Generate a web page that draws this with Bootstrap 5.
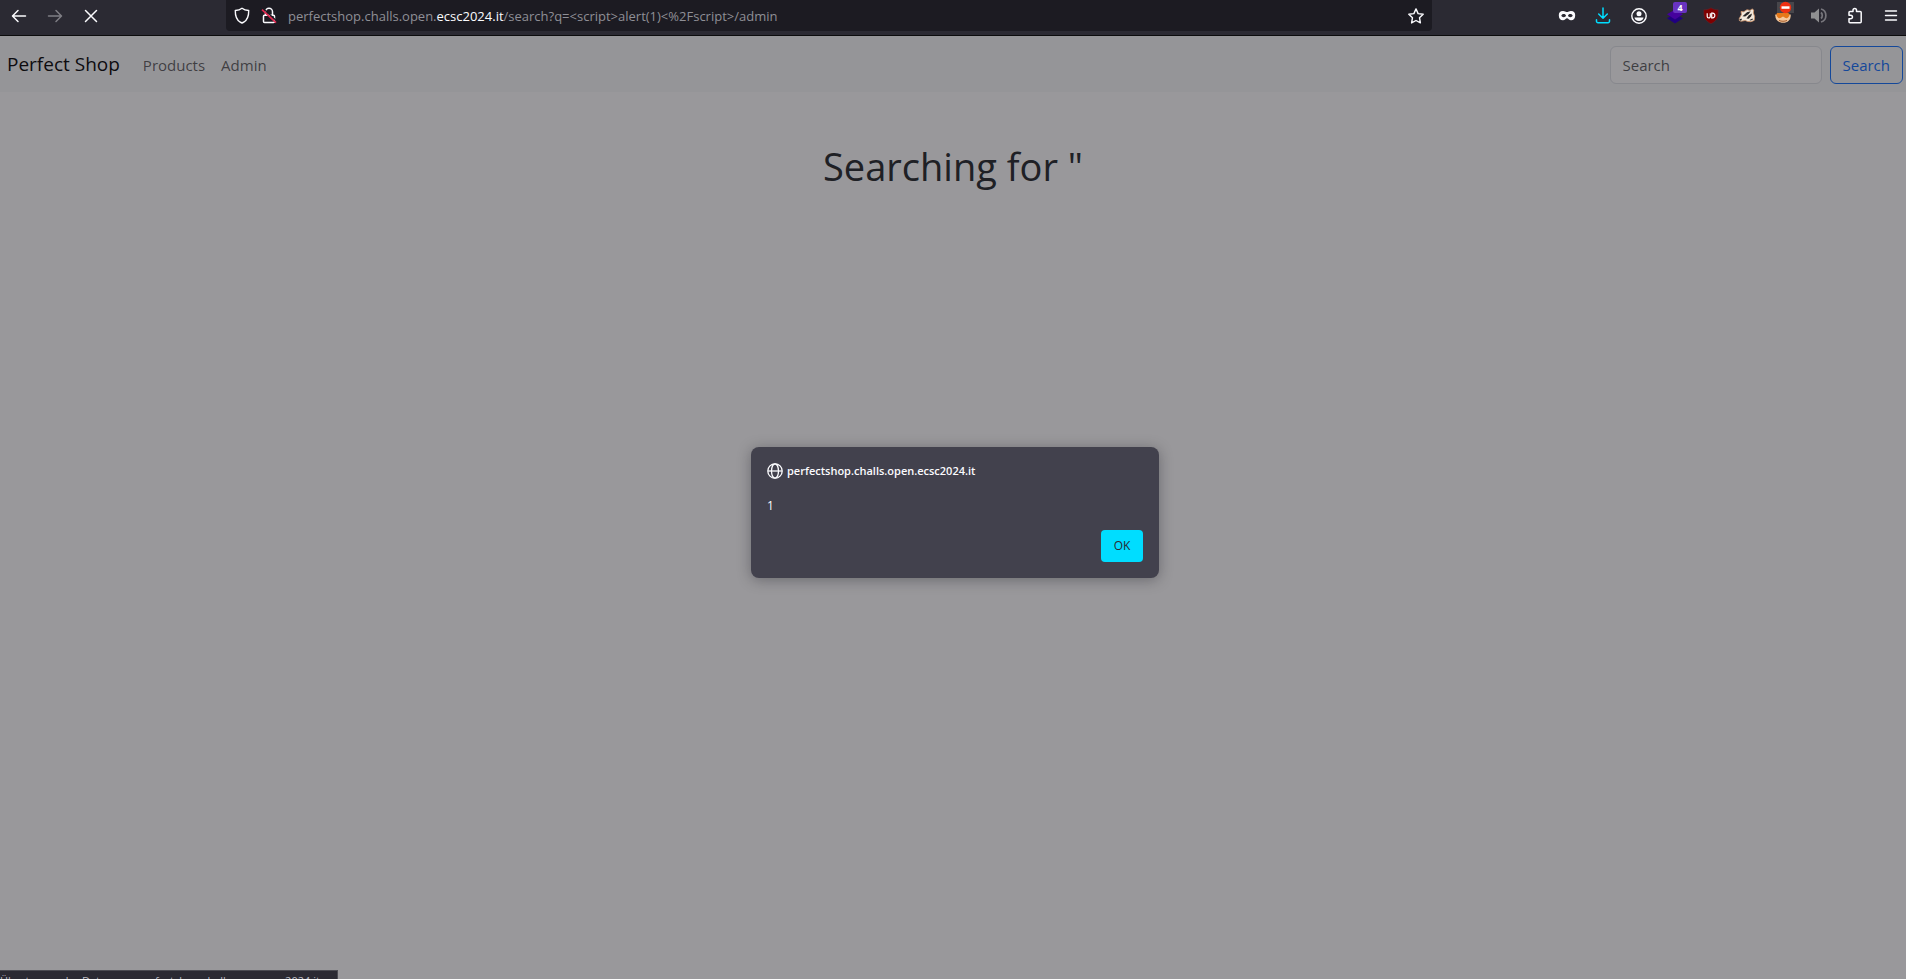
<!DOCTYPE html>
<html lang="en">
<head>
<meta charset="utf-8">
<meta name="viewport" content="width=device-width, initial-scale=1">
<title>Perfect Shop</title>
<link href="https://cdn.jsdelivr.net/npm/bootstrap@5.3.0/dist/css/bootstrap.min.css" rel="stylesheet">
<style>
body { font-family: "Open Sans", "Noto Sans", sans-serif; }
.browser-bar { height: 36px; padding: 0 7px 4px 11px; background: #2b2a33; border-bottom: 1px solid #0c0c0d; color: #fbfbfe; }
.tool-group { gap: 20px; }
.tool { width: 16px; height: 16px; padding: 0; border: 0; background: none; color: inherit; display: flex; align-items: center; justify-content: center; }
.tool svg, .address svg { width: 16px; height: 16px; overflow: visible; flex: none; display: block; }
.tool:disabled { opacity: .4; }
.address { height: 31px; margin: 0 127px; padding: 0 8px; background: #1c1b22; border-radius: 0 0 4px 4px; gap: 11px; }
.address-text { font-size: 13px; line-height: 20px; color: #8f8f96; }
.address-text strong { color: #fbfbfe; font-weight: 400; }
.tool-count { top: -6px; left: 6px; width: 14px; height: 11px; border-radius: 2px; background: #6833c0; color: #fff; font-size: 9px; font-weight: 700; line-height: 11px; }
.shop-nav { height: 56px; padding: 1px 3px 0 7px; }
.shop-nav .navbar-brand { font-size: 19px; margin-right: 15px; }
.shop-nav .nav-link, .shop-nav .form-control, .shop-nav .btn { font-size: 15px; line-height: 24px; }
.search-box { width: 212px; }
.results-title { font-size: 38px; line-height: 52px; }
.page-shade { background: rgba(28, 27, 34, .45); padding: 10px 0 0 4px; }
.alert-box { width: 408px; padding: 16px; background: #42414d; color: #fbfbfe; border-radius: 8px; box-shadow: 0 2px 14px rgba(20, 20, 30, .35); font-size: 12px; line-height: 16px; }
.alert-box svg { width: 16px; height: 16px; }
.alert-origin { gap: 4px; margin-bottom: 19px; font-weight: 600; font-size: 11px; }
.ok-btn { width: 42px; height: 32px; border-radius: 4px; background: #00ddff; color: #2b2a33; font-size: 12px; line-height: 16px; }
.ok-btn:hover { background: #80ebff; }
.status-tip { left: 0; bottom: 0; width: 338px; height: 9px; background: #2b2a33; border: solid #4b4b52; border-width: 1px 1px 0 0; color: #bbbbc2; font-size: 11px; line-height: 20px; }
</style>
</head>
<body class="vh-100 d-flex flex-column overflow-hidden">
<header class="browser-bar d-flex align-items-center flex-shrink-0">
  <div class="tool-group d-flex">
    <button class="tool" aria-label="Back"><svg viewBox="0 0 16 16" fill="none" stroke="currentColor" stroke-width="1.5" stroke-linecap="round" stroke-linejoin="round"><path d="M14.500 8H1.700M7 2.500 1.500 8 7 13.500"/></svg></button>
    <button class="tool" aria-label="Forward" disabled><svg viewBox="0 0 16 16" fill="none" stroke="currentColor" stroke-width="1.500" stroke-linecap="round" stroke-linejoin="round"><path d="M1.500 8h12.800M9 2.500 14.500 8 9 13.500"/></svg></button>
    <button class="tool" aria-label="Stop"><svg viewBox="0 0 16 16" fill="none" stroke="currentColor" stroke-width="1.500" stroke-linecap="round"><path d="m2.500 2.500 11 11m0-11-11 11"/></svg></button>
  </div>
  <div class="address d-flex align-items-center flex-grow-1 align-self-start">
    <svg viewBox="0 0 16 16" fill="none" stroke="#fbfbfe" stroke-width="1.400" stroke-linejoin="round"><path d="M8 .2c2 1.500 4.300 2.100 6.700 2.300.1 5-1.200 9.200-4.700 11.500L8 15l-2-1C2.500 11.700 1.200 7.500 1.300 2.500 3.700 2.300 6 1.700 8 .2z"/></svg>
    <svg viewBox="0 0 16 16" fill="none" stroke="#fbfbfe" stroke-width="1.500"><path d="M4.500 7V3.700a3.500 3.500 0 0 1 7 0V7M3.500 7.200h9a1 1 0 0 1 1 1v5.200a1 1 0 0 1-1 1h-9a1 1 0 0 1-1-1V8.200a1 1 0 0 1 1-1z"/><path d="m2 .5 14 12.700" stroke="#1c1b22" stroke-width="1.500"/><path d="m1 1.700 14 13" stroke="#e22850" stroke-width="1.600"/></svg>
    <span class="address-text flex-grow-1 text-nowrap">perfectshop.challs.open.<strong>ecsc2024.it</strong>/search?q=&lt;script&gt;alert(1)&lt;%2Fscript&gt;/admin</span>
    <button class="tool" aria-label="Bookmark this page"><svg viewBox="0 0 16 16" fill="none" stroke="currentColor" stroke-width="1.400" stroke-linejoin="round"><path d="m8 .9 2.100 4.700 5.100.6-3.700 3.500.9 5.200L8 12.500l-4.400 2.400.9-5.200L.8 6.200l5.100-.6z"/></svg></button>
  </div>
  <div class="tool-group d-flex">
    <button class="tool" aria-label="Private mask"><svg viewBox="0 0 16 16" fill="#fbfbfe"><path fill-rule="evenodd" d="M4 2.900C5.500 2.800 6.800 4 8 4s2.500-1.200 4-1.100c3 .1 4.200 1.700 4.200 4.300 0 3.300-1.700 5.200-4.200 5.100-2 0-2.800-2-4-2s-2 2-4 2C1.500 12.400-.2 10.500-.2 7.200-.2 4.600 1 3 4 2.900zM4.700 6C3.400 6 2.700 6.700 2.300 7.600c.4.900 1.100 1.600 2.400 1.600s2-.7 2.300-1.600C6.700 6.700 6 6 4.700 6zm6.600 0C10 6 9.300 6.700 9 7.600c.3.900 1 1.600 2.300 1.600s2-.7 2.400-1.600C13.300 6.700 12.600 6 11.300 6z"/></svg></button>
    <button class="tool" aria-label="Downloads"><svg viewBox="0 0 16 16" fill="none" stroke="#00ddff" stroke-width="1.500" stroke-linecap="round" stroke-linejoin="round"><path d="M8 0v10.200M3.700 6 8 10.300 12.300 6M1.500 11.800v1.400a1.500 1.500 0 0 0 1.500 1.500h10a1.500 1.500 0 0 0 1.500-1.500v-1.400"/></svg></button>
    <button class="tool" aria-label="Account"><svg viewBox="0 0 16 16" fill="#fbfbfe"><circle cx="8" cy="8" r="7.200" fill="none" stroke="#fbfbfe" stroke-width="1.400"/><circle cx="8" cy="5.800" r="2.500"/><path d="M3.500 9.500h9c-.2 2-2 3.500-4.500 3.500s-4.300-1.500-4.500-3.500z"/></svg></button>
    <button class="tool position-relative" aria-label="Layers, 4"><svg viewBox="0 0 16 16"><path d="m8 5.500 8 4.700-8 5.300-8-5.300z" fill="#200080"/><path d="m8 1.500 8 4.700-8 5.300-8-5.300z" fill="#45019d"/></svg><span class="tool-count position-absolute text-center">4</span></button>
    <button class="tool" aria-label="Content blocker"><svg viewBox="0 0 16 16"><path d="M8-.2c2 1.500 4.500 2 7.200 2 .2 7-.5 10.500-7.200 14C1.300 12.300.6 8.800.8 1.800 3.500 1.800 6 1.300 8-.2z" fill="#800000" stroke="#5d2730" stroke-width=".5"/><path d="M4.200 5.200v3.200a1.500 1.500 0 0 0 3.100 0V5.200m1.400 0v4.700h1a2.100 2.100 0 0 0 2.100-2.300 2.100 2.100 0 0 0-2.100-2.400z" fill="none" stroke="#fff" stroke-width="1.200"/></svg></button>
    <button class="tool" aria-label="Badger"><svg viewBox="0 0 16 16"><path d="M.3 10.500 2.500 6.500 2 3.500l2.700.3L8 1.700l3 .7 2.200-1.500 1.500 1.200-.3 2.800 1.200 3.500-.4 4-3.200 1.300-3.300-.2-2.500-1-4.200.8L.3 12.500z" fill="#f3e9dc" stroke="#ce9267" stroke-width=".8"/><path d="M3.500 8.200 8 4.200l3.700-1-2 2.800-3.500 2.500zM7.500 10.500l2.300-3.300L13 5.400l-.8 2.800-2.400 2.600zM.5 11.300l2-.8.4 1.400-1.700.9zM10.500 12l3-1.500.3 1.200-2.300.8z" fill="#292727"/></svg></button>
    <button class="tool" aria-label="Proxy switcher"><svg viewBox="0 0 16 16"><path d="M.3 6.500C0 11.500 3 14.800 8 14.800S16 11.500 15.700 6.500z" fill="#f4c79b"/><path d="M1.500 6c1-2.500 12-2.500 13 0 .3 2.500-2 4.800-4 4L8 8.500 5.500 10c-2 .8-4.300-1.500-4-4z" fill="#e57819"/><path d="M4 12.500c2.500 1 5.500 1 8 0" fill="none" stroke="#a45a2a"/><path d="M2-6h17V5H2z" fill="#47464b"/><circle cx="10.500" cy="-.5" r="5.700" fill="#ef3012"/><path d="M6.500-1.700h8V.8h-8z" fill="#fff"/></svg></button>
    <button class="tool" aria-label="Sound"><svg viewBox="0 0 16 16"><path d="M0 4.500h3.500L8 .5v14l-4.500-4H0z" fill="#8f8f91"/><path d="M10 4.500c1.700 1.500 1.700 4.500 0 6m0-9.500c6.500 1.800 6.500 11.200 0 13" fill="none" stroke="#77767c" stroke-width="1.700"/></svg></button>
    <button class="tool" aria-label="Extensions"><svg viewBox="0 0 16 16" fill="none" stroke="currentColor" stroke-width="1.500" stroke-linejoin="round"><path d="M6 3.500V2.300a1.500 1.500 0 0 1 3.500 0v1.200h3.700a1 1 0 0 1 1 1v9.200a1 1 0 0 1-1 1H3a1 1 0 0 1-1-1v-3h1.700a1.700 1.700 0 0 0 0-3.500H2V4.500a1 1 0 0 1 1-1z"/></svg></button>
    <button class="tool" aria-label="Menu"><svg viewBox="0 0 16 16" stroke="currentColor" stroke-width="1.400" stroke-linecap="round"><path d="M2.500 3h11M2.500 7.500h11M2.500 12h11"/></svg></button>
  </div>
</header>
<div class="position-relative flex-grow-1">
  <nav class="shop-nav navbar navbar-expand navbar-light bg-light">
    <a class="navbar-brand" href="#">Perfect Shop</a>
    <ul class="navbar-nav me-auto">
      <li class="nav-item"><a class="nav-link" href="#">Products</a></li>
      <li class="nav-item"><a class="nav-link" href="#">Admin</a></li>
    </ul>
    <form class="d-flex gap-2" role="search">
      <input class="search-box form-control" type="search" placeholder="Search" aria-label="Search">
      <button class="btn btn-outline-primary" type="submit">Search</button>
    </form>
  </nav>
  <main class="container-fluid mt-5 text-center">
    <h1 class="results-title fw-normal">Searching for "</h1>
  </main>
  <div class="page-shade position-absolute top-0 start-0 w-100 h-100 d-flex align-items-center justify-content-center">
    <section class="alert-box" role="alertdialog" aria-modal="true" aria-labelledby="origin">
      <div class="alert-origin d-flex align-items-center">
        <svg viewBox="0 0 16 16" fill="none" stroke="currentColor" stroke-width="1.300"><circle cx="8" cy="8" r="7.200"/><ellipse cx="8" cy="8" rx="3.500" ry="7.200"/><path d="M1 8h14"/></svg>
        <span id="origin">perfectshop.challs.open.ecsc2024.it</span>
      </div>
      <p class="mb-3">1</p>
      <div class="d-flex justify-content-end"><button class="ok-btn btn border-0 p-0">OK</button></div>
    </section>
  </div>
  <div class="status-tip position-absolute overflow-hidden text-nowrap">Übertragen der Daten von perfectshop.challs.open.ecsc2024.it…</div>
</div>
<script src="https://cdn.jsdelivr.net/npm/bootstrap@5.3.0/dist/js/bootstrap.bundle.min.js"></script>
</body>
</html>
